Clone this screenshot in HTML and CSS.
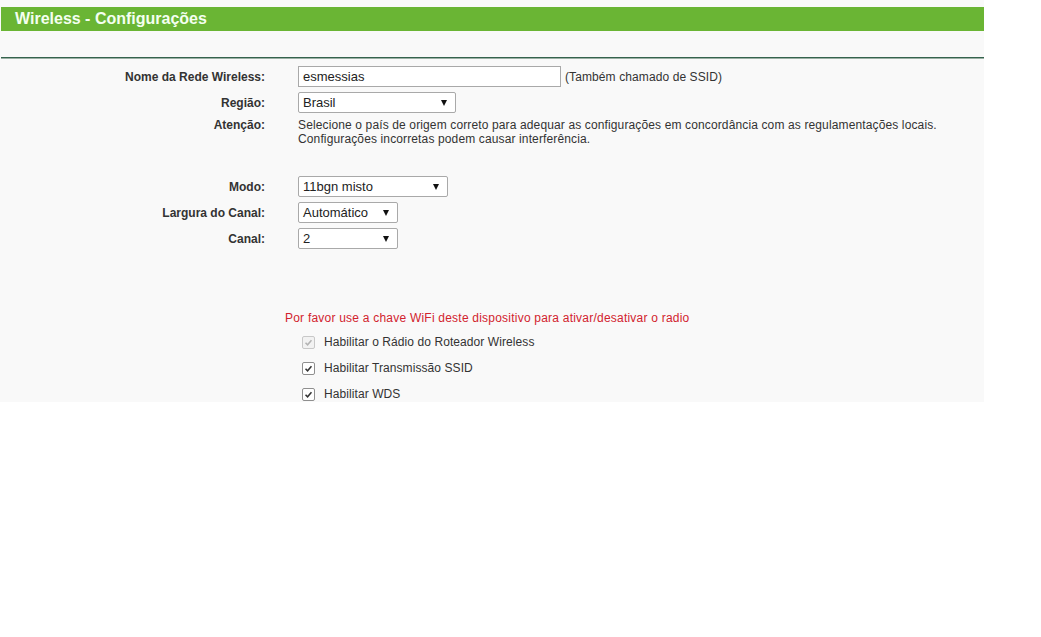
FILE: index.html
```html
<!DOCTYPE html>
<html lang="pt">
<head>
<meta charset="utf-8">
<title>Wireless - Configurações</title>
<link rel="stylesheet" href="styles.css">
</head>
<body>
<div class="page">
  <div class="title-bar">Wireless - Configurações</div>
  <div class="rule"></div>
  <div class="form">
    <div class="label">Nome da Rede Wireless:</div>
    <div class="value"><span class="input">esmessias</span><span class="hint">(Também chamado de SSID)</span></div>

    <div class="label">Região:</div>
    <div class="value"><span class="select w-region">Brasil<i class="arrow"></i></span></div>

    <div class="label top">Atenção:</div>
    <div class="value note">Selecione o país de origem correto para adequar as configurações em concordância com as regulamentações locais.<br>Configurações incorretas podem causar interferência.</div>

    <div class="spacer"></div>

    <div class="label">Modo:</div>
    <div class="value"><span class="select w-mode">11bgn misto<i class="arrow"></i></span></div>

    <div class="label">Largura do Canal:</div>
    <div class="value"><span class="select w-small">Automático<i class="arrow"></i></span></div>

    <div class="label">Canal:</div>
    <div class="value"><span class="select w-small">2<i class="arrow"></i></span></div>
  </div>

  <div class="radio-section">
    <p class="warning">Por favor use a chave WiFi deste dispositivo para ativar/desativar o radio</p>
    <div class="check-row"><span class="check disabled"><svg viewBox="0 0 13 13" width="13" height="13"><path d="M3 6.8 L5.4 9.2 L10 3.8" fill="none" stroke="#b3b3b3" stroke-width="1.8"/></svg></span>Habilitar o Rádio do Roteador Wireless</div>
    <div class="check-row"><span class="check"><svg viewBox="0 0 13 13" width="13" height="13"><path d="M3 6.8 L5.4 9.2 L10 3.8" fill="none" stroke="#333" stroke-width="1.8"/></svg></span>Habilitar Transmissão SSID</div>
    <div class="check-row"><span class="check"><svg viewBox="0 0 13 13" width="13" height="13"><path d="M3 6.8 L5.4 9.2 L10 3.8" fill="none" stroke="#333" stroke-width="1.8"/></svg></span>Habilitar WDS</div>
  </div>
</div>
</body>
</html>
```

FILE: styles.css
```css
html, body {
  margin: 0;
  padding: 0;
  background: #ffffff;
}

body {
  font-family: "Liberation Sans", Arial, sans-serif;
  font-size: 12px;
  color: #333333;
}

.page {
  width: 984px;
  height: 402px;
  background: #f9f9f9;
  padding-top: 7px;
  box-sizing: border-box;
  overflow: hidden;
}

.title-bar {
  margin-left: 1px;
  height: 24px;
  line-height: 23px;
  background: #6ab534;
  color: #f4fff0;
  font-weight: bold;
  font-size: 16px;
  padding-left: 14px;
}

.rule {
  margin: 26px 0 0 1px;
  height: 1px;
  background: #35634d;
  border-bottom: 1px solid #9bb0a5;
}

.form {
  display: grid;
  grid-template-columns: 265px 1fr;
  column-gap: 33px;
  row-gap: 5px;
  align-items: center;
  margin-top: 7px;
}

.label {
  text-align: right;
  font-weight: bold;
  color: #333;
}

.label.top {
  align-self: start;
  line-height: 14px;
}

.value {
  display: flex;
  align-items: center;
}

.note {
  line-height: 14px;
  letter-spacing: 0.13px;
}

.spacer {
  grid-column: 1 / 3;
  height: 20px;
}

.input {
  box-sizing: border-box;
  width: 263px;
  height: 21px;
  border: 1px solid #a9a9a9;
  background: #fff;
  font-size: 13px;
  line-height: 19px;
  padding-left: 4px;
  color: #222;
}

.hint {
  margin-left: 4px;
  letter-spacing: 0.1px;
}

.select {
  box-sizing: border-box;
  height: 21px;
  border: 1px solid #a9a9a9;
  border-radius: 2px;
  background: #fff;
  font-size: 13px;
  line-height: 19px;
  padding: 0 8px 0 4px;
  display: flex;
  align-items: center;
  justify-content: space-between;
  color: #222;
}

.w-region { width: 158px; }
.w-mode { width: 150px; }
.w-small { width: 100px; }

.arrow {
  width: 0;
  height: 0;
  border-left: 3.5px solid transparent;
  border-right: 3.5px solid transparent;
  border-top: 6px solid #111;
}

.radio-section {
  padding-left: 285px;
  margin-top: 62px;
}

.warning {
  margin: 0 0 4px;
  color: #d2232e;
  line-height: 14px;
  letter-spacing: 0.22px;
}

.check-row {
  display: flex;
  align-items: center;
  height: 26px;
  padding-left: 17px;
  letter-spacing: 0.08px;
}

.check {
  box-sizing: border-box;
  width: 13px;
  height: 13px;
  border: 1px solid #8f8f8f;
  border-radius: 2px;
  background: #fff;
  margin-right: 9px;
  display: flex;
  align-items: center;
  justify-content: center;
}

.check svg {
  display: block;
  width: 11px;
  height: 11px;
}

.check.disabled {
  border-color: #c8c8c8;
  background: #f2f2f2;
}
```
